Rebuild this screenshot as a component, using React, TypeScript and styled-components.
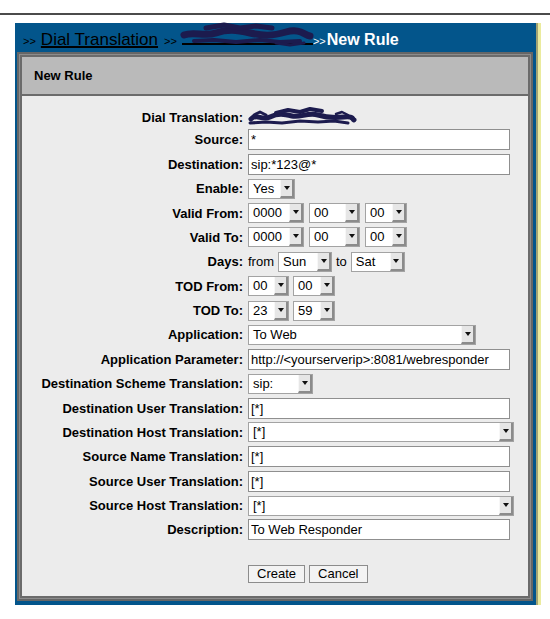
import React from "react";
import styled, { createGlobalStyle } from "styled-components";

const Global = createGlobalStyle`
  html, body { margin: 0; padding: 0; background: #ffffff; }
  body {
    font-family: "Liberation Sans", Arial, Helvetica, sans-serif;
    font-size: 13px;
    color: #000;
  }
`;

const TopRule = styled.div`
  margin-top: 13px;
  height: 2px;
  background: #4b4b4b;
`;

const Panel = styled.div`
  margin: 8px 0 0 15px;
  width: 521px;
  box-sizing: border-box;
  background: #03558b;
  padding: 0 3px 4px 2px;
  box-shadow: 0 2px 0 #a2a374, 2px 0 0 #a2a374, 2px 2px 0 #a2a374,
    5px 0 0 #ebeb9e, 0 5px 0 #ebeb9e, 5px 5px 0 #ebeb9e;
`;

const TitleBar = styled.div`
  height: 29px;
  box-sizing: border-box;
  padding: 5px 0 0 6px;
  display: flex;
  align-items: baseline;
  white-space: nowrap;
  line-height: normal;
`;

const Sep = styled.span<{ $light?: boolean }>`
  font-size: 11px;
  color: ${(p) => (p.$light ? "#ffffff" : "#000000")};
  margin: 0 ${(p) => (p.$light ? "1px" : "5px")} 0 0;
`;

const CrumbLink = styled.a`
  font-size: 17px;
  color: #000;
  text-decoration: underline;
  text-decoration-thickness: 2px;
  text-underline-offset: 1px;
  margin-right: 6px;
  cursor: pointer;
`;

const RedactedLink = styled.span`
  display: inline-block;
  width: 131px;
  height: 15px;
  border-bottom: 2px solid #000;
  position: relative;
`;

const RedactedOverlay = styled.svg`
  position: absolute;
  left: -2px;
  top: -6px;
  overflow: visible;
`;

const Current = styled.span`
  font-size: 16px;
  font-weight: bold;
  color: #fff;
`;

const Frame = styled.div`
  border: 2px solid #666666;
  background: #8c8c8c;
  padding: 1px;
`;

const Inner = styled.div`
  border: 2px solid #6b6b6b;
  background: #ececec;
`;

const Header = styled.div`
  height: 37px;
  line-height: 38px;
  padding-left: 12px;
  background: #bababa;
  border-bottom: 2px solid #6b6b6b;
  font-weight: bold;
  font-size: 13px;
`;

const Body = styled.div`
  padding: 12px 0 13px;
`;

const Form = styled.div`
  display: grid;
  grid-template-columns: 221px 1fr;
  grid-template-rows: 18px;
  grid-auto-rows: 21px;
  column-gap: 5px;
  row-gap: 3.375px;
  align-items: center;
`;

const Label = styled.div`
  text-align: right;
  font-weight: bold;
  font-size: 13px;
  white-space: nowrap;
`;

const Field = styled.div<{ $gap?: number }>`
  display: flex;
  align-items: center;
  gap: ${(p) => p.$gap ?? 4}px;
  white-space: nowrap;
`;

const PlainText = styled.span`
  font-size: 13px;
`;

const TextInput = styled.input<{ $w?: number }>`
  box-sizing: border-box;
  width: ${(p) => p.$w ?? 262}px;
  height: 21px;
  margin: 0;
  padding: 0 2px;
  border: 1px solid #8f8f8f;
  background: #fff;
  color: #000;
  font: 13px "Liberation Sans", Arial, sans-serif;
  outline: none;
`;

const SelectBox = styled.div<{ $w: number }>`
  box-sizing: border-box;
  display: inline-flex;
  align-items: stretch;
  width: ${(p) => p.$w}px;
  height: 20px;
  border: 1px solid #a3a3a3;
  background: #fff;
  cursor: default;
`;

const SelectValue = styled.span`
  flex: 1;
  padding-left: 4px;
  line-height: 18px;
  font-size: 13px;
  overflow: hidden;
`;

const SelectArrow = styled.span`
  position: relative;
  width: 11px;
  background: #e6e6e6;
  border-left: 1px solid #f7f7f7;
  border-right: 2px solid #8b8b8b;
  border-bottom: 2px solid #8b8b8b;
  &::after {
    content: "";
    position: absolute;
    left: 50%;
    top: 50%;
    margin: -2px 0 0 -3px;
    border-left: 3px solid transparent;
    border-right: 3px solid transparent;
    border-top: 4px solid #111;
  }
`;

const Actions = styled.div`
  display: grid;
  grid-template-columns: 221px 1fr;
  column-gap: 5px;
  padding-top: 25px;
`;

const Buttons = styled.div`
  grid-column: 2;
  display: flex;
  gap: 4px;
`;

const Button = styled.button`
  height: 18px;
  margin: 0;
  padding: 0 8px;
  border: 1px solid #8c8c8c;
  border-radius: 0;
  background: #f3f3f3;
  color: #000;
  font: 13px "Liberation Sans", Arial, sans-serif;
  line-height: 16px;
`;

const Scribble = styled.svg`
  display: block;
`;

function Select({ value, w }: { value: string; w: number }) {
  return (
    <SelectBox $w={w} role="listbox" aria-label={value}>
      <SelectValue>{value}</SelectValue>
      <SelectArrow />
    </SelectBox>
  );
}

const INK = "#1c1b4e";

function ValueScribble() {
  return (
    <Scribble width="110" height="22" viewBox="0 0 110 22">
      <g fill="none" stroke={INK} strokeLinecap="round" strokeLinejoin="round">
        <path d="M3 13 C 8 7, 14 15, 22 11 S 36 8, 44 10 S 60 6, 70 9 S 86 12, 96 11 S 104 13, 106 14" strokeWidth="5" />
        <path d="M2 17 L 18 16 L 34 17 L 52 15 L 70 16 L 86 15 L 100 17" strokeWidth="3" />
        <path d="M28 7 L 40 4 L 52 6 L 62 3 L 74 5" strokeWidth="4" />
        <path d="M6 9 L 12 6 L 18 9" strokeWidth="3" />
        <path d="M88 8 L 94 6 L 100 9" strokeWidth="2.5" />
      </g>
    </Scribble>
  );
}

function TitleScribble() {
  return (
    <RedactedOverlay width="134" height="26" viewBox="0 0 134 26">
      <g fill="none" stroke={INK} strokeLinecap="round" strokeLinejoin="round">
        <path d="M4 13 C 14 9, 24 15, 36 11 S 56 8, 70 11 S 92 14, 106 10 S 124 13, 130 14" strokeWidth="7" />
        <path d="M14 19 L 34 18 L 56 20 L 80 18 L 100 20 L 120 19" strokeWidth="4" />
        <path d="M26 6 L 44 3 L 60 6 L 76 4 L 92 6" strokeWidth="5" />
        <path d="M96 21 L 110 23 L 124 21" strokeWidth="3" />
      </g>
    </RedactedOverlay>
  );
}

export default function App() {
  return (
    <>
      <Global />
      <TopRule />
      <Panel>
        <TitleBar>
          <Sep>&gt;&gt;</Sep>
          <CrumbLink>Dial Translation</CrumbLink>
          <Sep>&gt;&gt;</Sep>
          <RedactedLink>
            <TitleScribble />
          </RedactedLink>
          <Sep $light>&gt;&gt;</Sep>
          <Current>New Rule</Current>
        </TitleBar>
        <Frame>
          <Inner>
            <Header>New Rule</Header>
            <Body>
              <Form>
                <Label>Dial Translation:</Label>
                <Field>
                  <ValueScribble />
                </Field>

                <Label>Source:</Label>
                <Field>
                  <TextInput defaultValue="*" />
                </Field>

                <Label>Destination:</Label>
                <Field>
                  <TextInput defaultValue="sip:*123@*" />
                </Field>

                <Label>Enable:</Label>
                <Field>
                  <Select value="Yes" w={47} />
                </Field>

                <Label>Valid From:</Label>
                <Field $gap={5}>
                  <Select value="0000" w={56} />
                  <Select value="00" w={51} />
                  <Select value="00" w={42} />
                </Field>

                <Label>Valid To:</Label>
                <Field $gap={5}>
                  <Select value="0000" w={56} />
                  <Select value="00" w={51} />
                  <Select value="00" w={42} />
                </Field>

                <Label>Days:</Label>
                <Field>
                  <PlainText>from</PlainText>
                  <Select value="Sun" w={54} />
                  <PlainText>to</PlainText>
                  <Select value="Sat" w={54} />
                </Field>

                <Label>TOD From:</Label>
                <Field>
                  <Select value="00" w={41} />
                  <Select value="00" w={42} />
                </Field>

                <Label>TOD To:</Label>
                <Field>
                  <Select value="23" w={41} />
                  <Select value="59" w={42} />
                </Field>

                <Label>Application:</Label>
                <Field>
                  <Select value="To Web" w={228} />
                </Field>

                <Label>Application Parameter:</Label>
                <Field>
                  <TextInput defaultValue="http://<yourserverip>:8081/webresponder" />
                </Field>

                <Label>Destination Scheme Translation:</Label>
                <Field>
                  <Select value="sip:" w={65} />
                </Field>

                <Label>Destination User Translation:</Label>
                <Field>
                  <TextInput defaultValue="[*]" />
                </Field>

                <Label>Destination Host Translation:</Label>
                <Field>
                  <Select value="[*]" w={266} />
                </Field>

                <Label>Source Name Translation:</Label>
                <Field>
                  <TextInput defaultValue="[*]" />
                </Field>

                <Label>Source User Translation:</Label>
                <Field>
                  <TextInput defaultValue="[*]" />
                </Field>

                <Label>Source Host Translation:</Label>
                <Field>
                  <Select value="[*]" w={266} />
                </Field>

                <Label>Description:</Label>
                <Field>
                  <TextInput defaultValue="To Web Responder" />
                </Field>
              </Form>
              <Actions>
                <Buttons>
                  <Button type="button">Create</Button>
                  <Button type="button">Cancel</Button>
                </Buttons>
              </Actions>
            </Body>
          </Inner>
        </Frame>
      </Panel>
    </>
  );
}
